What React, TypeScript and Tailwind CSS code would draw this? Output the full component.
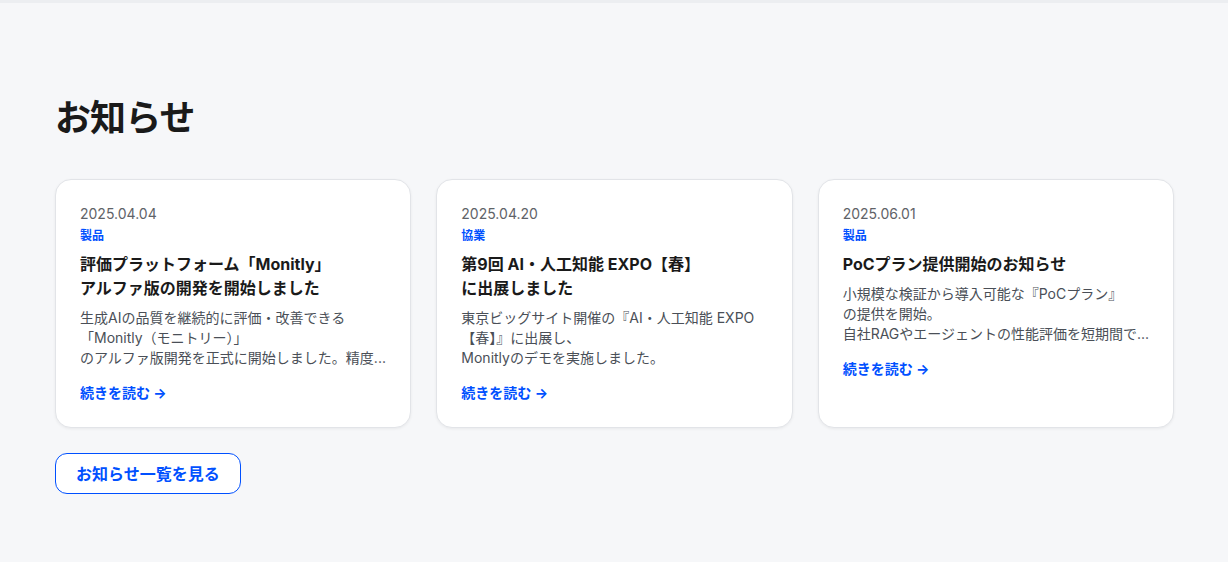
import React from "react";

const items = [
  {
    date: "2025.04.04",
    cat: "製品",
    title: ["評価プラットフォーム「Monitly」", "アルファ版の開発を開始しました"],
    desc: ["生成AIの品質を継続的に評価・改善できる", "「Monitly（モニトリー）」", "のアルファ版開発を正式に開始しました。精度..."],
  },
  {
    date: "2025.04.20",
    cat: "協業",
    title: ["第9回 AI・人工知能 EXPO【春】", "に出展しました"],
    desc: ["東京ビッグサイト開催の『AI・人工知能 EXPO", "【春】』に出展し、", "Monitlyのデモを実施しました。"],
  },
  {
    date: "2025.06.01",
    cat: "製品",
    title: ["PoCプラン提供開始のお知らせ"],
    desc: ["小規模な検証から導入可能な『PoCプラン』", "の提供を開始。", "自社RAGやエージェントの性能評価を短期間で..."],
  },
];

export default function App() {
  return (
    <div
      className="min-h-screen bg-[#f6f7f9] text-[#1a1a1a]"
      style={{ fontFamily: '"Inter", "Noto Sans CJK JP", sans-serif' }}
    >
      <div className="h-[3px] bg-[#eceef1]" />
      <section className="pl-[55px] pr-[54px] pt-[95px] pb-16">
        <h2 className="text-[36px] font-bold leading-[40px] tracking-tight text-[#1a1a1a]">お知らせ</h2>
        <div className="mt-[41px] grid grid-cols-3 gap-[25px]">
          {items.map((it) => (
            <div
              key={it.date}
              className="rounded-2xl border border-[#e2e4e8] bg-white p-6 shadow-[0_1px_3px_rgba(0,0,0,0.06)]"
            >
              <div className="text-[14px] leading-5 text-[#5f6368]">{it.date}</div>
              <div className="mt-1 text-[12px] font-bold leading-4 text-[#0050ff]">{it.cat}</div>
              <div className="mt-2 text-[16px] font-bold leading-6 text-[#1a1a1a]">
                {it.title.map((t) => (
                  <div key={t}>{t}</div>
                ))}
              </div>
              <div className="mt-2 text-[14px] leading-5 text-[#4a4f57]">
                {it.desc.map((d) => (
                  <div key={d} className="whitespace-nowrap">{d}</div>
                ))}
              </div>
              <a className="mt-[15px] block text-[14px] font-bold leading-5 text-[#0050ff]">続きを読む →</a>
            </div>
          ))}
        </div>
        <button className="mt-[25px] h-[41px] rounded-xl border border-[#0050ff] bg-white px-5 text-[16px] font-bold leading-6 text-[#0050ff]">
          お知らせ一覧を見る
        </button>
      </section>
    </div>
  );
}
